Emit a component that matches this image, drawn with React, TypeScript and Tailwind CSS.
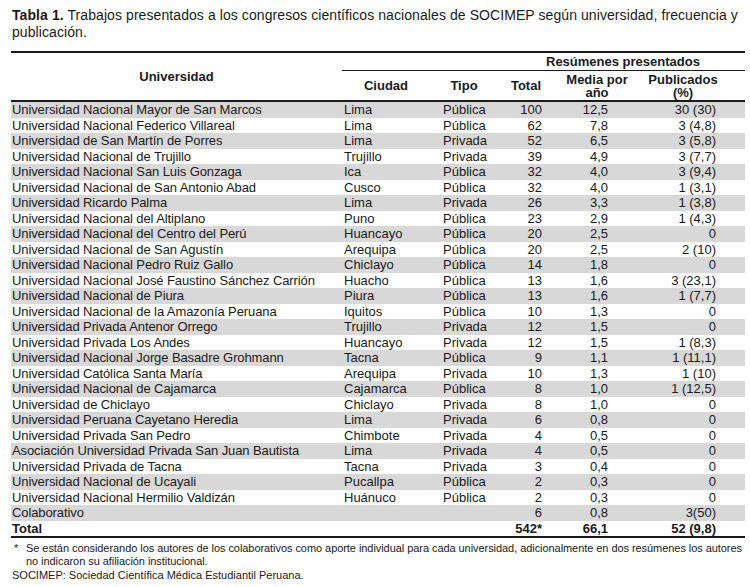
import React from "react";

interface Row {
  name: string;
  city: string;
  type: string;
  total: string;
  media: string;
  pub: string;
}

const rows: Row[] = [
  { name: "Universidad Nacional Mayor de San Marcos", city: "Lima", type: "Pública", total: "100", media: "12,5", pub: "30 (30)" },
  { name: "Universidad Nacional Federico Villareal", city: "Lima", type: "Pública", total: "62", media: "7,8", pub: "3 (4,8)" },
  { name: "Universidad de San Martín de Porres", city: "Lima", type: "Privada", total: "52", media: "6,5", pub: "3 (5,8)" },
  { name: "Universidad Nacional de Trujillo", city: "Trujillo", type: "Privada", total: "39", media: "4,9", pub: "3 (7,7)" },
  { name: "Universidad Nacional San Luis Gonzaga", city: "Ica", type: "Pública", total: "32", media: "4,0", pub: "3 (9,4)" },
  { name: "Universidad Nacional de San Antonio Abad", city: "Cusco", type: "Pública", total: "32", media: "4,0", pub: "1 (3,1)" },
  { name: "Universidad Ricardo Palma", city: "Lima", type: "Privada", total: "26", media: "3,3", pub: "1 (3,8)" },
  { name: "Universidad Nacional del Altiplano", city: "Puno", type: "Pública", total: "23", media: "2,9", pub: "1 (4,3)" },
  { name: "Universidad Nacional del Centro del Perú", city: "Huancayo", type: "Pública", total: "20", media: "2,5", pub: "0" },
  { name: "Universidad Nacional de San Agustín", city: "Arequipa", type: "Pública", total: "20", media: "2,5", pub: "2 (10)" },
  { name: "Universidad Nacional Pedro Ruiz Gallo", city: "Chiclayo", type: "Pública", total: "14", media: "1,8", pub: "0" },
  { name: "Universidad Nacional José Faustino Sánchez Carrión", city: "Huacho", type: "Pública", total: "13", media: "1,6", pub: "3 (23,1)" },
  { name: "Universidad Nacional de Piura", city: "Piura", type: "Pública", total: "13", media: "1,6", pub: "1 (7,7)" },
  { name: "Universidad Nacional de la Amazonía Peruana", city: "Iquitos", type: "Pública", total: "10", media: "1,3", pub: "0" },
  { name: "Universidad Privada Antenor Orrego", city: "Trujillo", type: "Privada", total: "12", media: "1,5", pub: "0" },
  { name: "Universidad Privada Los Andes", city: "Huancayo", type: "Privada", total: "12", media: "1,5", pub: "1 (8,3)" },
  { name: "Universidad Nacional Jorge Basadre Grohmann", city: "Tacna", type: "Pública", total: "9", media: "1,1", pub: "1 (11,1)" },
  { name: "Universidad Católica Santa María", city: "Arequipa", type: "Privada", total: "10", media: "1,3", pub: "1 (10)" },
  { name: "Universidad Nacional de Cajamarca", city: "Cajamarca", type: "Pública", total: "8", media: "1,0", pub: "1 (12,5)" },
  { name: "Universidad de Chiclayo", city: "Chiclayo", type: "Privada", total: "8", media: "1,0", pub: "0" },
  { name: "Universidad Peruana Cayetano Heredia", city: "Lima", type: "Privada", total: "6", media: "0,8", pub: "0" },
  { name: "Universidad Privada San Pedro", city: "Chimbote", type: "Privada", total: "4", media: "0,5", pub: "0" },
  { name: "Asociación Universidad Privada San Juan Bautista", city: "Lima", type: "Privada", total: "4", media: "0,5", pub: "0" },
  { name: "Universidad Privada de Tacna", city: "Tacna", type: "Privada", total: "3", media: "0,4", pub: "0" },
  { name: "Universidad Nacional de Ucayali", city: "Pucallpa", type: "Pública", total: "2", media: "0,3", pub: "0" },
  { name: "Universidad Nacional Hermilio Valdizán", city: "Huánuco", type: "Pública", total: "2", media: "0,3", pub: "0" },
  { name: "Colaborativo", city: "", type: "", total: "6", media: "0,8", pub: "3(50)" },
];

const cols = "grid grid-cols-[331px_100px_58px_42px_66px_108px_28px]";

export default function App() {
  return (
    <div className="w-[750px] h-[587px] bg-white text-[#1a1a1a] font-['Liberation_Sans',Arial,sans-serif] overflow-hidden">
      {/* Titulo */}
      <p className="pl-[12px] pr-[2px] pt-[7px] text-[14px] leading-[17px] tracking-[0.08px]">
        <span className="font-bold">Tabla 1.</span> Trabajos presentados a los congresos científicos nacionales de SOCIMEP según universidad, frecuencia y publicación.
      </p>

      <div className="ml-[11px] w-[734px] mt-[10px]">
        <div className="h-[2px] bg-[#1a1a1a]" />

        {/* Cabecera */}
        <div className="flex h-[47px] text-[13px] font-bold">
          <div className="w-[331px] flex items-center justify-center">Universidad</div>
          <div className="flex-1 flex flex-col">
            <div className="h-[17px] pl-[204px] leading-[17px]">Resúmenes presentados</div>
            <div className="h-px bg-[#1a1a1a]" />
            <div className="flex-1 grid grid-cols-[88px_68px_46px_106px_66px_29px] leading-[13px]">
              <div className="flex items-center justify-center">Ciudad</div>
              <div className="flex items-center justify-center">Tipo</div>
              <div className="flex items-center justify-end pr-[3px]">Total</div>
              <div className="flex flex-col items-center justify-center">
                <span>Media por</span>
                <span>año</span>
              </div>
              <div className="flex flex-col items-center justify-center">
                <span>Publicados</span>
                <span>(%)</span>
              </div>
              <div />
            </div>
          </div>
        </div>

        <div className="h-[2px] bg-[#1a1a1a]" />

        {/* Filas */}
        <div className="text-[13px]">
          {rows.map((r, i) => (
            <div
              key={i}
              className={`${cols} h-[15.5px] leading-[15.5px] ${i % 2 === 0 ? "bg-[#d8d8d8]" : "bg-white"}`}
            >
              <div className="pl-[1px] whitespace-nowrap tracking-[-0.1px]">{r.name}</div>
              <div className="pl-[2px]">{r.city}</div>
              <div className="pl-[1px]">{r.type}</div>
              <div className="text-right">{r.total}</div>
              <div className="text-right">{r.media}</div>
              <div className="text-right">{r.pub}</div>
              <div />
            </div>
          ))}
          <div className={`${cols} h-[15.5px] leading-[15.5px] font-bold`}>
            <div className="pl-[1px]">Total</div>
            <div />
            <div />
            <div className="text-right">542*</div>
            <div className="text-right">66,1</div>
            <div className="text-right">52 (9,8)</div>
            <div />
          </div>
        </div>

        <div className="h-[2px] bg-[#1a1a1a]" />
      </div>

      {/* Notas */}
      <div className="pl-[12px] pt-[4px] text-[11px] leading-[13px]">
        <div className="flex">
          <span className="w-[14px] pl-[2px]">*</span>
          <div className="flex-1 flex flex-col whitespace-nowrap tracking-[-0.06px]">
            <span>Se están considerando los autores de los colaborativos como aporte individual para cada universidad, adicionalmente en dos resúmenes los autores</span>
            <span>no indicaron su afiliación institucional.</span>
          </div>
        </div>
        <div className="mt-[1px]">SOCIMEP: Sociedad Científica Médica Estudiantil Peruana.</div>
      </div>
    </div>
  );
}
